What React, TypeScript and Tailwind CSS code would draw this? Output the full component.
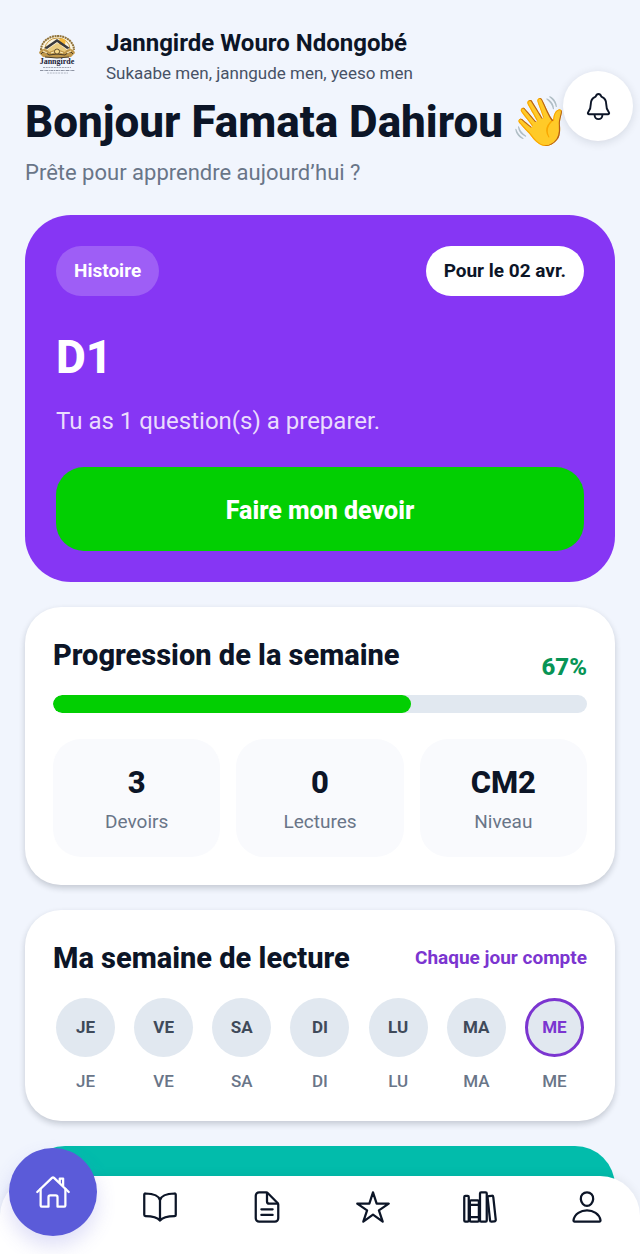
import {
  IoBookOutline,
  IoDocumentTextOutline,
  IoHomeOutline,
  IoLibraryOutline,
  IoNotificationsOutline,
  IoPersonOutline,
  IoStarOutline,
} from "react-icons/io5";

const stats = [
  { value: "3", label: "Devoirs" },
  { value: "0", label: "Lectures" },
  { value: "CM2", label: "Niveau" },
];

const days = ["JE", "VE", "SA", "DI", "LU", "MA", "ME"];
const today = "ME";
const progress = 67;

const links = [
  { label: "Lectures", Icon: IoBookOutline },
  { label: "Devoirs", Icon: IoDocumentTextOutline },
  { label: "Favoris", Icon: IoStarOutline },
  { label: "Bibliothèque", Icon: IoLibraryOutline },
  { label: "Profil", Icon: IoPersonOutline },
];

function SchoolLogo() {
  return (
    <svg viewBox="0 0 64 64" className="size-16 shrink-0" role="img" aria-label="Janngirde">
      <path d="M16 27a16.500 14 0 0 1 33 0" fill="#fbf3dc" stroke="#8f7138" strokeWidth="2" strokeDasharray="2 .6" />
      <path d="M20 26a12.500 11 0 0 1 25 0" fill="none" stroke="#c79a45" strokeWidth="1" />
      <circle cx="37" cy="19" r="3.500" fill="#f6b93b" />
      <path d="M32 16l13 9-3 1-10-7-10 7-3-1z" fill="#3b3a3c" />
      <path d="M23 26l9-6 9 6v3H23z" fill="#e9cb80" />
      <path d="M14 30q1-4 5-4t5 3l8-3 8 3q1-3 5-3t5 4l-4 4-14 1-14-1z" fill="#c0974a" />
      <path d="M16 31q2-3 4-2l4 3 8-1 8 1 4-3q2-1 4 2M20 34l12 1 12-1" fill="none" stroke="#4c3e28" strokeWidth="1" />
      <path d="M18 28l4 2M46 28l-4 2M26 30l3-1M38 30l-3-1" stroke="#fbe9b8" strokeWidth="1.200" />
      <circle cx="32" cy="28.500" r="2.500" fill="#f8d98a" stroke="#4b3a22" strokeWidth=".8" />
      <text x="32" y="41" textAnchor="middle" fontFamily="Liberation Serif, serif" fontWeight="700" fontSize="8" fill="#1b2238">
        Janngirde
      </text>
      <path d="M18 44.500h28" stroke="#8c91a0" strokeWidth=".8" strokeDasharray="2 .7" />
      <path d="M15 47.500h35" stroke="#757b8b" strokeWidth=".8" strokeDasharray="3 .6 1 .6" />
      <path d="M22 50h21" stroke="#a3a8b5" strokeWidth=".8" strokeDasharray="2 .8" />
    </svg>
  );
}

export default function App() {
  return (
    <div className="min-h-screen bg-[#f1f5fd] font-['Roboto',sans-serif] text-[#0c1527]">
      <header className="relative px-[25px] pt-[23px]">
        <div className="flex items-center gap-[17px]">
          <SchoolLogo />
          <div className="pt-1">
            <p className="text-[24px] leading-[32px] font-bold">Janngirde Wouro Ndongobé</p>
            <p className="text-[17px] leading-[28px] text-[#475266]">Sukaabe men, janngude men, yeeso men</p>
          </div>
        </div>
        <h1 className="mt-[7px] flex items-center gap-[7px] text-[44px] leading-[56px] font-extrabold whitespace-nowrap">
          Bonjour Famata Dahirou
          <span className="font-['Noto_Color_Emoji'] text-[48px]">👋</span>
        </h1>
        <p className="mt-[9px] text-[22px] leading-[28px] text-[#697588]">Prête pour apprendre aujourd’hui ?</p>
        <button
          type="button"
          aria-label="Notifications"
          className="absolute top-[71px] right-[7px] flex size-[70px] items-center justify-center rounded-full bg-white shadow-[0_2px_10px_rgba(15,23,42,0.12)]"
        >
          <IoNotificationsOutline size={31} />
        </button>
      </header>

      <main className="flex flex-col gap-[25px] px-[25px] pt-7 pb-6">
        <section className="rounded-[46px] bg-[#8636f4] p-[31px] text-white">
          <div className="flex items-center justify-between text-[19px] leading-[26px] font-bold">
            <span className="rounded-full bg-[#9e5ef6] px-[18px] py-3">Histoire</span>
            <span className="rounded-full bg-white px-[18px] py-3 text-[#0c1527]">Pour le 02 avr.</span>
          </div>
          <h2 className="mt-[31px] text-[46px] leading-[60px] font-extrabold">D1</h2>
          <p className="mt-[18px] text-[24px] leading-[32px] text-[#eadcfd]">Tu as 1 question(s) a preparer.</p>
          <button type="button" className="mt-[30px] h-[84px] w-full rounded-[28px] bg-[#02cf02] pt-1 text-[25px] font-extrabold">
            Faire mon devoir
          </button>
        </section>

        <section className="rounded-[36px] bg-white p-7 shadow-[0_3px_6px_rgba(15,23,42,0.2)]">
          <div className="flex items-end justify-between font-extrabold">
            <h2 className="mb-3 text-[29px] leading-[40px]">Progression de la semaine</h2>
            <span className="text-[24px] leading-[40px] text-[#079455]">{progress}%</span>
          </div>
          <div
            role="progressbar"
            aria-label="Progression de la semaine"
            aria-valuenow={progress}
            aria-valuemin={0}
            aria-valuemax={100}
            className="mt-2 h-[18px] overflow-hidden rounded-full bg-[#e1e8f0]"
          >
            <div className="h-full rounded-full bg-[#02cf02]" style={{ width: `${progress}%` }} />
          </div>
          <div className="mt-[26px] grid grid-cols-3 gap-4">
            {stats.map((s) => (
              <div key={s.label} className="rounded-[28px] bg-[#f9fafd] pt-6 pb-5 text-center">
                <p className="text-[31px] leading-[40px] font-extrabold">{s.value}</p>
                <p className="mt-1 text-[19px] leading-[30px] text-[#697588]">{s.label}</p>
              </div>
            ))}
          </div>
        </section>

        <section className="rounded-[36px] bg-white p-7 shadow-[0_3px_6px_rgba(15,23,42,0.2)]">
          <div className="flex items-center justify-between">
            <h2 className="text-[29px] leading-[40px] font-extrabold">Ma semaine de lecture</h2>
            <span className="text-[19px] font-bold text-[#7b35d0]">Chaque jour compte</span>
          </div>
          <ul className="mt-5 flex justify-between px-[3px] text-center">
            {days.map((d) => (
              <li key={d}>
                <span
                  className={
                    d === today
                      ? "flex size-[59px] items-center justify-center rounded-full border-[3px] border-[#7b35d0] bg-[#e1e8f0] text-[17px] font-bold text-[#7b35d0]"
                      : "flex size-[59px] items-center justify-center rounded-full bg-[#e1e8f0] text-[17px] font-bold text-[#3f4a5a]"
                  }
                >
                  {d}
                </span>
                <span className="mt-3 block text-[17px] leading-[24px] font-medium text-[#697588]">{d}</span>
              </li>
            ))}
          </ul>
        </section>

        <section className="h-20 rounded-[46px] bg-[#02bcab]" />
      </main>

      <nav
        aria-label="Navigation principale"
        className="fixed inset-x-0 bottom-0 rounded-t-[40px] bg-white pb-[18px] shadow-[0_-2px_10px_rgba(15,23,42,0.06)]"
      >
        <div className="grid h-[60px] grid-cols-6 grid-rows-1">
          <a
            href="#accueil"
            aria-label="Accueil"
            className="flex size-[88px] items-center justify-center self-end justify-self-center rounded-full bg-[#5b5bd9] text-white shadow-[0_10px_20px_rgba(91,91,217,0.2)]"
          >
            <IoHomeOutline size={36} />
          </a>
          {links.map(({ label, Icon }) => (
            <a key={label} href={`#${label.toLowerCase()}`} aria-label={label} className="flex items-center justify-center pt-0.5">
              <Icon size={36} />
            </a>
          ))}
        </div>
      </nav>
    </div>
  );
}
